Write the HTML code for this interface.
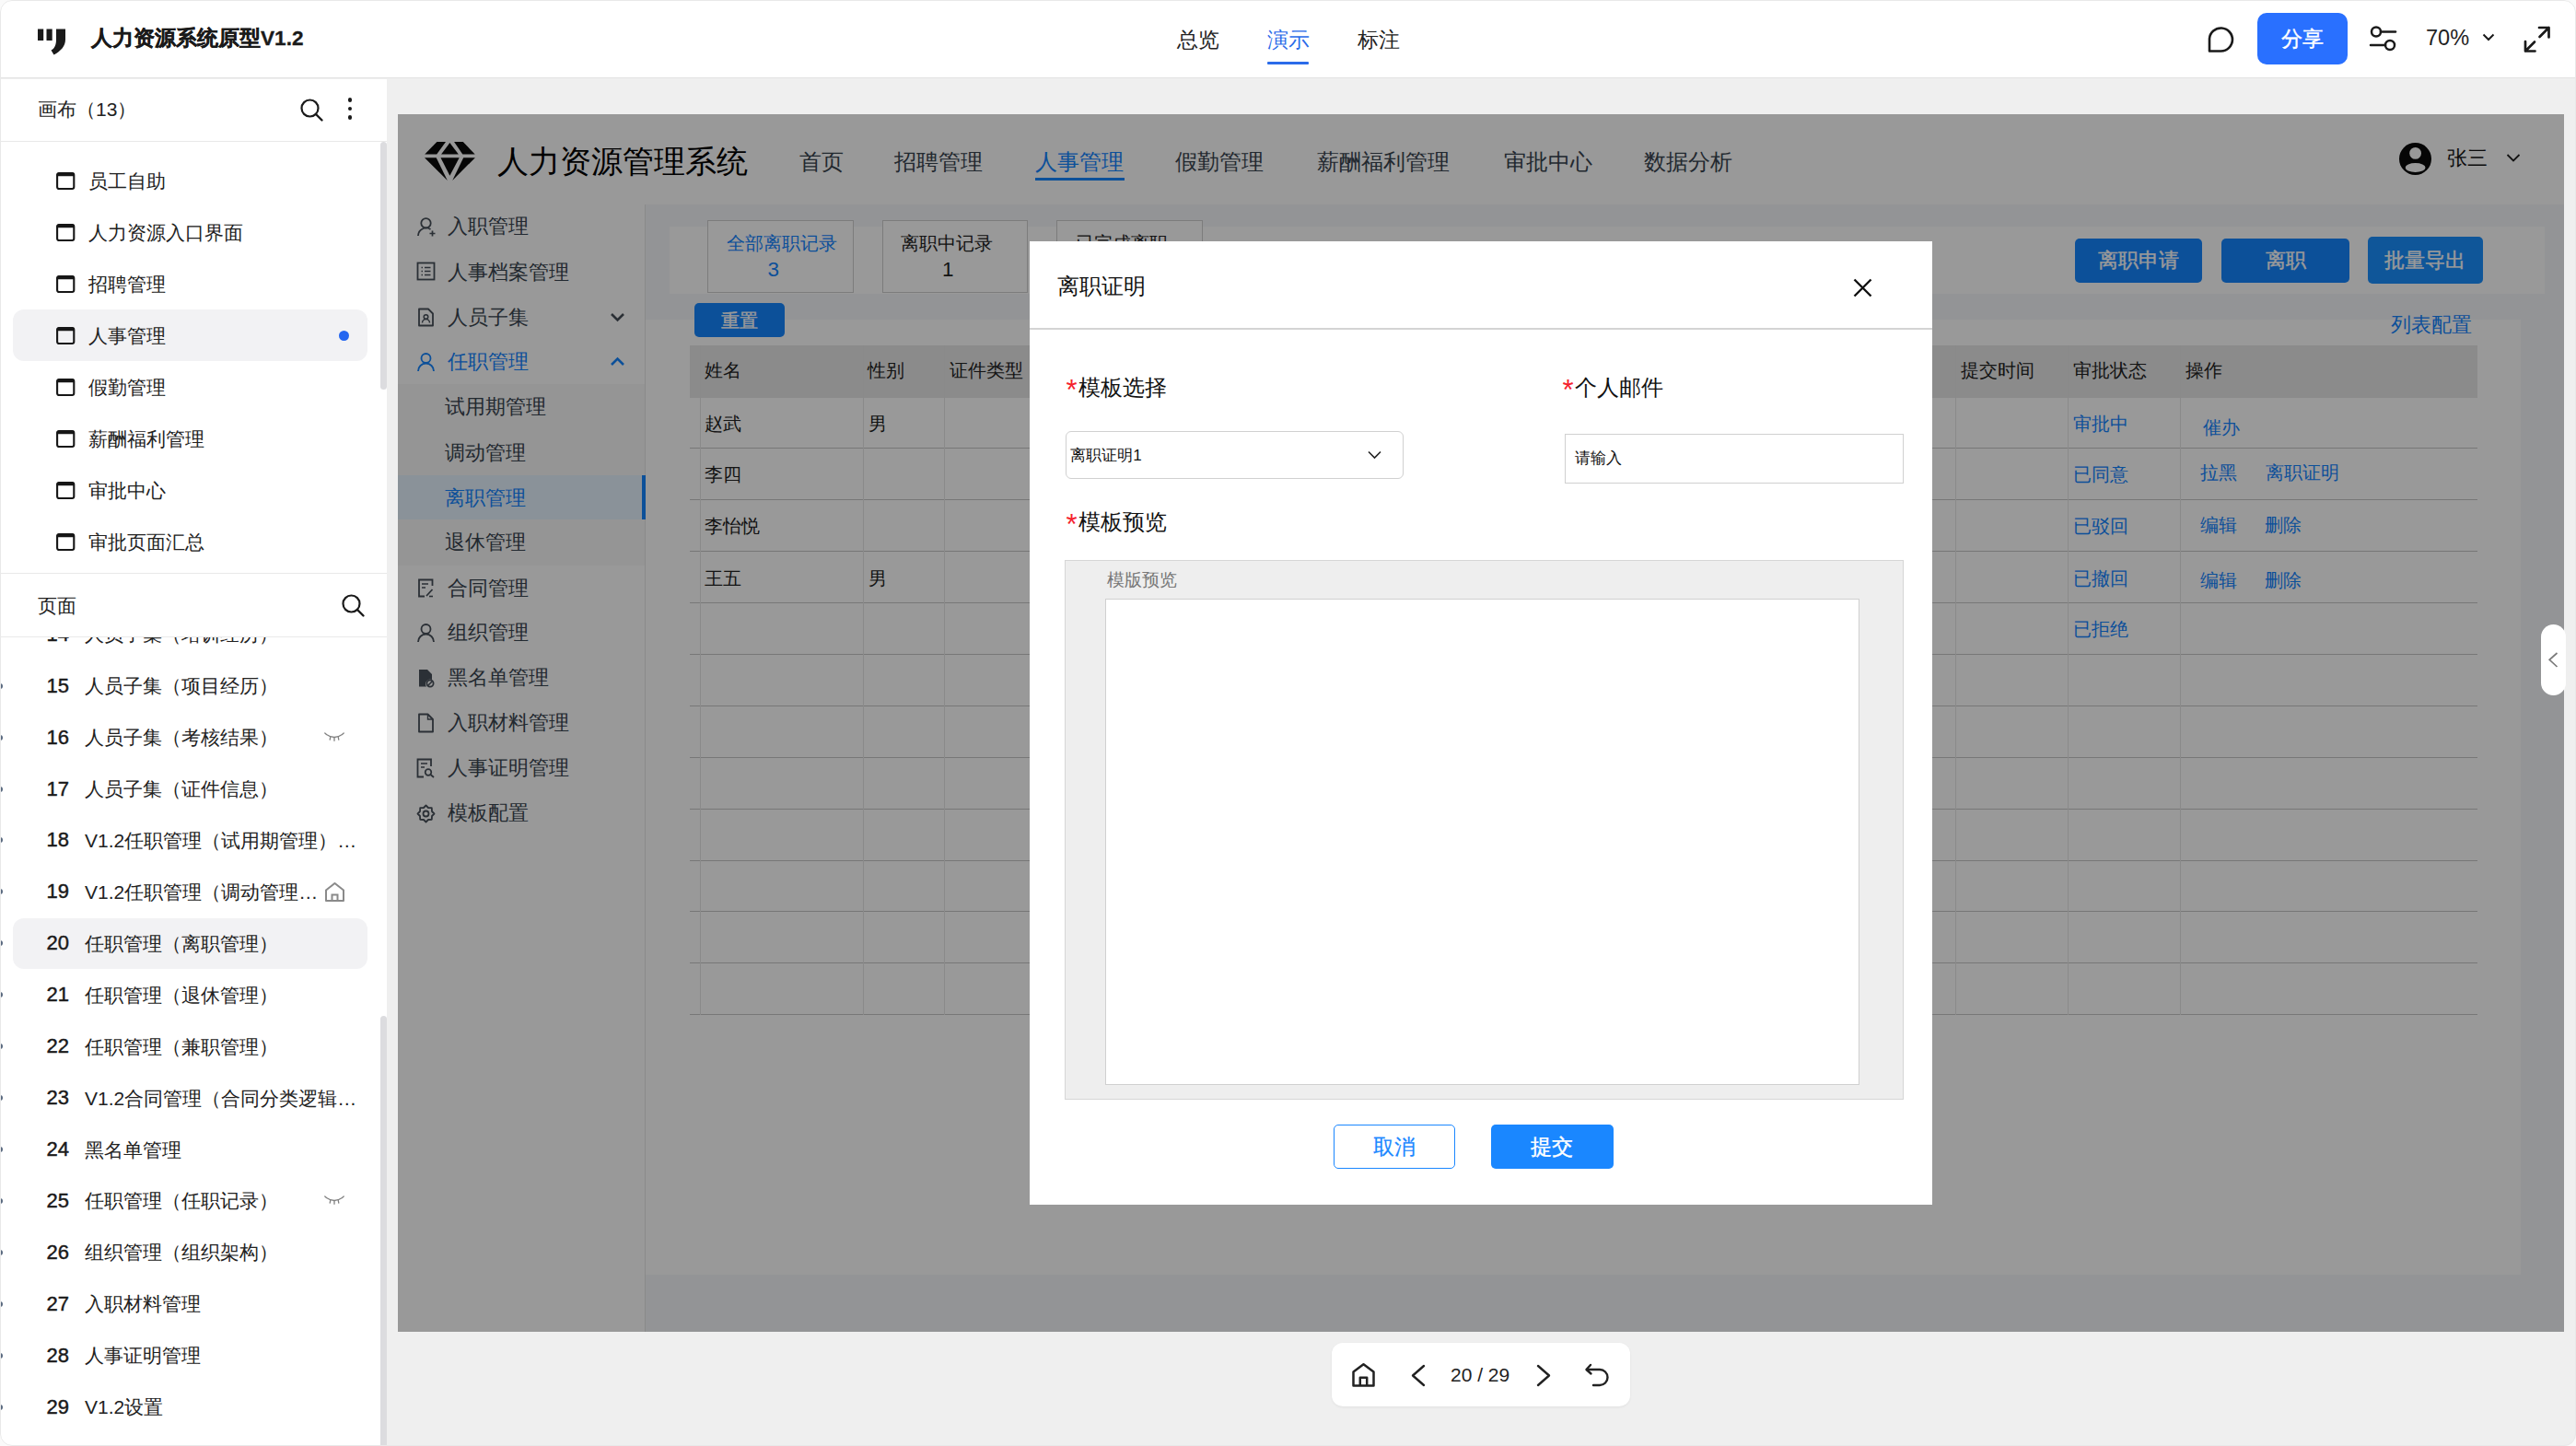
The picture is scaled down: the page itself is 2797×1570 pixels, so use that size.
<!DOCTYPE html>
<html><head><meta charset="utf-8"><style>
*{box-sizing:border-box;margin:0;padding:0}
html,body{width:2797px;height:1570px;overflow:hidden;background:#fafafa;font-family:"Liberation Sans",sans-serif;color:#222}
.a{position:absolute}
.t{position:absolute;white-space:nowrap;line-height:1}
#win{position:absolute;left:0;top:0;width:2797px;height:1570px;border-radius:13px;overflow:hidden;background:#fff}
#wb{position:absolute;left:0;top:0;width:2797px;height:1570px;border:1.5px solid #e9e9e9;border-radius:13px;pointer-events:none}
</style></head><body>
<div id="win">
<div class="a" style="left:0.0px;top:0.0px;width:2797.0px;height:84.0px;background:#fff"></div>
<div class="a" style="left:0.0px;top:84.0px;width:2797.0px;height:1.0px;background:#e2e2e2"></div>
<div class="a" style="left:0.0px;top:85.0px;width:2797.0px;height:1.0px;background:#f0f0f0"></div>
<svg class="a" style="left:40.0px;top:31.0px" width="32" height="29" viewBox="0 0 32 29"><rect x="1" y="0.5" width="6.2" height="12.5" fill="#1a1a1a"/><rect x="10.5" y="0.5" width="6.2" height="12.5" fill="#1a1a1a"/><path d="M21 0.5 H31 V12 C31 19 26 24.5 18.5 28.5 L15.5 23.5 C19.5 21.5 21 17.5 21 12 Z" fill="#1a1a1a"/></svg>
<div class="t" style="left:99.0px;top:30.7px;font-size:22.6px;color:#1a1a1a;font-weight:bold;-webkit-text-stroke:0.3px #1a1a1a">人力资源系统原型V1.2</div>
<div class="t" style="left:1278.0px;top:31.5px;font-size:23px;color:#222;font-weight:normal;">总览</div>
<div class="t" style="left:1376.0px;top:31.5px;font-size:23px;color:#2b6be9;font-weight:normal;">演示</div>
<div class="a" style="left:1376.0px;top:67.0px;width:45.0px;height:3.0px;background:#2b6be9;border-radius:1px"></div>
<div class="t" style="left:1474.0px;top:31.5px;font-size:23px;color:#222;font-weight:normal;">标注</div>
<svg class="a" style="left:2396.0px;top:27.0px" width="31" height="31" viewBox="0 0 31 31"><path d="M3 28.5 V15 A12.5 12.5 0 1 1 15.5 28.5 Z" fill="none" stroke="#1a1a1a" stroke-width="2.6" stroke-linejoin="round"/></svg>
<div class="a" style="left:2451.0px;top:14.0px;width:98.0px;height:56.0px;background:#2970ff;border-radius:10px"></div>
<div class="t" style="left:2477.0px;top:31.9px;font-size:22.6px;color:#fff;font-weight:normal;-webkit-text-stroke:0.4px #fff">分享</div>
<svg class="a" style="left:2572.0px;top:27.0px" width="31" height="31" viewBox="0 0 31 31"><circle cx="8" cy="7.5" r="5" fill="none" stroke="#1a1a1a" stroke-width="2.5"/><path d="M13 7.5 H29" stroke="#1a1a1a" stroke-width="2.5" stroke-linecap="round"/><circle cx="23" cy="22" r="5" fill="none" stroke="#1a1a1a" stroke-width="2.5"/><path d="M2 22 H18" stroke="#1a1a1a" stroke-width="2.5" stroke-linecap="round"/></svg>
<div class="t" style="left:2634.0px;top:30.2px;font-size:23.5px;color:#222;font-weight:normal;">70%</div>
<svg class="a" style="left:2695.0px;top:36.0px" width="14" height="9" viewBox="0 0 14 9"><path d="M1.5 1.5 L7 7 L12.5 1.5" fill="none" stroke="#1a1a1a" stroke-width="2"/></svg>
<svg class="a" style="left:2739.0px;top:27.0px" width="32" height="31" viewBox="0 0 32 31"><path d="M18 3 H28.5 V13.5 M28.5 3 L18.5 13 M3 18 V28.5 H13.5 M3 28.5 L13 18.5" fill="none" stroke="#1a1a1a" stroke-width="2.7" stroke-linejoin="round" stroke-linecap="round"/></svg>
<div class="a" style="left:0.0px;top:86.0px;width:420.0px;height:1484.0px;background:#fff"></div>
<div class="t" style="left:41.0px;top:108.0px;font-size:21px;color:#222;font-weight:normal;">画布（13）</div>
<svg class="a" style="left:325.0px;top:106.0px" width="27" height="27" viewBox="0 0 27 27"><circle cx="11.5" cy="11.5" r="9" fill="none" stroke="#1a1a1a" stroke-width="2.2"/><path d="M18 18 L24.5 24.5" stroke="#1a1a1a" stroke-width="2.4" stroke-linecap="round"/></svg>
<div class="a" style="left:377.5px;top:106.3px;width:4.5px;height:4.5px;border-radius:50%;background:#1a1a1a"></div>
<div class="a" style="left:377.5px;top:115.8px;width:4.5px;height:4.5px;border-radius:50%;background:#1a1a1a"></div>
<div class="a" style="left:377.5px;top:125.3px;width:4.5px;height:4.5px;border-radius:50%;background:#1a1a1a"></div>
<div class="a" style="left:0.0px;top:153.0px;width:420.0px;height:1.0px;background:#e9e9e9"></div>
<div class="a" style="left:14.0px;top:336.0px;width:385.0px;height:56.0px;border-radius:12px;background:#f2f2f4"></div>
<svg class="a" style="left:61.0px;top:186.9px" width="22" height="20" viewBox="0 0 22 20"><rect x="1.1" y="1.1" width="18.2" height="16.9" rx="2" fill="none" stroke="#161616" stroke-width="2.1"/><rect x="0.5" y="0.5" width="19.4" height="3.8" rx="1.5" fill="#161616"/></svg>
<div class="t" style="left:96.0px;top:186.0px;font-size:21px;color:#222;font-weight:normal;">员工自助</div>
<svg class="a" style="left:61.0px;top:243.0px" width="22" height="20" viewBox="0 0 22 20"><rect x="1.1" y="1.1" width="18.2" height="16.9" rx="2" fill="none" stroke="#161616" stroke-width="2.1"/><rect x="0.5" y="0.5" width="19.4" height="3.8" rx="1.5" fill="#161616"/></svg>
<div class="t" style="left:96.0px;top:242.1px;font-size:21px;color:#222;font-weight:normal;">人力资源入口界面</div>
<svg class="a" style="left:61.0px;top:299.0px" width="22" height="20" viewBox="0 0 22 20"><rect x="1.1" y="1.1" width="18.2" height="16.9" rx="2" fill="none" stroke="#161616" stroke-width="2.1"/><rect x="0.5" y="0.5" width="19.4" height="3.8" rx="1.5" fill="#161616"/></svg>
<div class="t" style="left:96.0px;top:298.1px;font-size:21px;color:#222;font-weight:normal;">招聘管理</div>
<svg class="a" style="left:61.0px;top:355.0px" width="22" height="20" viewBox="0 0 22 20"><rect x="1.1" y="1.1" width="18.2" height="16.9" rx="2" fill="none" stroke="#161616" stroke-width="2.1"/><rect x="0.5" y="0.5" width="19.4" height="3.8" rx="1.5" fill="#161616"/></svg>
<div class="t" style="left:96.0px;top:354.1px;font-size:21px;color:#222;font-weight:normal;">人事管理</div>
<svg class="a" style="left:61.0px;top:411.1px" width="22" height="20" viewBox="0 0 22 20"><rect x="1.1" y="1.1" width="18.2" height="16.9" rx="2" fill="none" stroke="#161616" stroke-width="2.1"/><rect x="0.5" y="0.5" width="19.4" height="3.8" rx="1.5" fill="#161616"/></svg>
<div class="t" style="left:96.0px;top:410.2px;font-size:21px;color:#222;font-weight:normal;">假勤管理</div>
<svg class="a" style="left:61.0px;top:467.1px" width="22" height="20" viewBox="0 0 22 20"><rect x="1.1" y="1.1" width="18.2" height="16.9" rx="2" fill="none" stroke="#161616" stroke-width="2.1"/><rect x="0.5" y="0.5" width="19.4" height="3.8" rx="1.5" fill="#161616"/></svg>
<div class="t" style="left:96.0px;top:466.2px;font-size:21px;color:#222;font-weight:normal;">薪酬福利管理</div>
<svg class="a" style="left:61.0px;top:523.2px" width="22" height="20" viewBox="0 0 22 20"><rect x="1.1" y="1.1" width="18.2" height="16.9" rx="2" fill="none" stroke="#161616" stroke-width="2.1"/><rect x="0.5" y="0.5" width="19.4" height="3.8" rx="1.5" fill="#161616"/></svg>
<div class="t" style="left:96.0px;top:522.3px;font-size:21px;color:#222;font-weight:normal;">审批中心</div>
<svg class="a" style="left:61.0px;top:579.2px" width="22" height="20" viewBox="0 0 22 20"><rect x="1.1" y="1.1" width="18.2" height="16.9" rx="2" fill="none" stroke="#161616" stroke-width="2.1"/><rect x="0.5" y="0.5" width="19.4" height="3.8" rx="1.5" fill="#161616"/></svg>
<div class="t" style="left:96.0px;top:578.3px;font-size:21px;color:#222;font-weight:normal;">审批页面汇总</div>
<div class="a" style="left:368.0px;top:358.5px;width:11.0px;height:11.0px;border-radius:50%;background:#2466f0"></div>
<div class="a" style="left:413.0px;top:154.0px;width:7.0px;height:269.0px;border-radius:4px;background:#dcdcdf"></div>
<div class="a" style="left:0.0px;top:622.0px;width:420.0px;height:1.0px;background:#e9e9e9"></div>
<div class="t" style="left:41.0px;top:647.0px;font-size:21px;color:#222;font-weight:normal;">页面</div>
<svg class="a" style="left:370.0px;top:644.0px" width="27" height="27" viewBox="0 0 27 27"><circle cx="11.5" cy="11.5" r="9" fill="none" stroke="#1a1a1a" stroke-width="2.2"/><path d="M18 18 L24.5 24.5" stroke="#1a1a1a" stroke-width="2.4" stroke-linecap="round"/></svg>
<div class="a" style="left:0.0px;top:691.0px;width:420.0px;height:1.0px;background:#e9e9e9"></div>
<div class="a" style="left:0;top:692px;width:420px;height:878px;overflow:hidden">
<div class="a" style="left:-3.0px;top:-6.3px;width:6.0px;height:6.0px;border-radius:50%;background:#5a6a80"></div>
<div class="t" style="left:50.5px;top:-14.3px;font-size:22px;color:#1a1a1a;font-weight:normal;-webkit-text-stroke:0.45px #1a1a1a">14</div>
<div class="t" style="left:92.0px;top:-13.8px;font-size:21px;color:#222;font-weight:normal;">人员子集（培训经历）</div>
<div class="a" style="left:-3.0px;top:49.6px;width:6.0px;height:6.0px;border-radius:50%;background:#5a6a80"></div>
<div class="t" style="left:50.5px;top:41.6px;font-size:22px;color:#1a1a1a;font-weight:normal;-webkit-text-stroke:0.45px #1a1a1a">15</div>
<div class="t" style="left:92.0px;top:42.1px;font-size:21px;color:#222;font-weight:normal;">人员子集（项目经历）</div>
<div class="a" style="left:-3.0px;top:105.6px;width:6.0px;height:6.0px;border-radius:50%;background:#5a6a80"></div>
<div class="t" style="left:50.5px;top:97.6px;font-size:22px;color:#1a1a1a;font-weight:normal;-webkit-text-stroke:0.45px #1a1a1a">16</div>
<div class="t" style="left:92.0px;top:98.1px;font-size:21px;color:#222;font-weight:normal;">人员子集（考核结果）</div>
<svg class="a" style="left:352.0px;top:102.6px" width="22" height="12" viewBox="0 0 22 12"><path d="M2.5 2.5 Q11 8.5 19.5 2.5 M2.5 2.5 L0.8 1 M19.5 2.5 L21.2 1" fill="none" stroke="#808080" stroke-width="1.3" stroke-linecap="round"/><path d="M6.8 5.2 L6.2 8.2 M11 6 V9.3 M15.2 5.2 L15.8 8.2" stroke="#808080" stroke-width="1.3" stroke-linecap="round"/></svg>
<div class="a" style="left:-3.0px;top:161.5px;width:6.0px;height:6.0px;border-radius:50%;background:#5a6a80"></div>
<div class="t" style="left:50.5px;top:153.5px;font-size:22px;color:#1a1a1a;font-weight:normal;-webkit-text-stroke:0.45px #1a1a1a">17</div>
<div class="t" style="left:92.0px;top:154.0px;font-size:21px;color:#222;font-weight:normal;">人员子集（证件信息）</div>
<div class="a" style="left:-3.0px;top:217.4px;width:6.0px;height:6.0px;border-radius:50%;background:#5a6a80"></div>
<div class="t" style="left:50.5px;top:209.4px;font-size:22px;color:#1a1a1a;font-weight:normal;-webkit-text-stroke:0.45px #1a1a1a">18</div>
<div class="t" style="left:92.0px;top:209.9px;font-size:21px;color:#222;font-weight:normal;">V1.2任职管理（试用期管理）…</div>
<div class="a" style="left:-3.0px;top:273.4px;width:6.0px;height:6.0px;border-radius:50%;background:#5a6a80"></div>
<div class="t" style="left:50.5px;top:265.4px;font-size:22px;color:#1a1a1a;font-weight:normal;-webkit-text-stroke:0.45px #1a1a1a">19</div>
<div class="t" style="left:92.0px;top:265.9px;font-size:21px;color:#222;font-weight:normal;">V1.2任职管理（调动管理…</div>
<svg class="a" style="left:352.0px;top:264.9px" width="23" height="23" viewBox="0 0 23 23"><path d="M2 21 V9.5 L11.5 2 L21 9.5 V21 Z" fill="none" stroke="#8a8a8a" stroke-width="2" stroke-linejoin="round"/><path d="M8.5 21 V14.5 H14.5 V21" fill="none" stroke="#8a8a8a" stroke-width="2"/></svg>
<div class="a" style="left:14.0px;top:304.8px;width:385.0px;height:55.0px;border-radius:12px;background:#f2f2f4"></div>
<div class="a" style="left:-3.0px;top:329.3px;width:6.0px;height:6.0px;border-radius:50%;background:#5a6a80"></div>
<div class="t" style="left:50.5px;top:321.3px;font-size:22px;color:#1a1a1a;font-weight:normal;-webkit-text-stroke:0.45px #1a1a1a">20</div>
<div class="t" style="left:92.0px;top:321.8px;font-size:21px;color:#222;font-weight:normal;">任职管理（离职管理）</div>
<div class="a" style="left:-3.0px;top:385.2px;width:6.0px;height:6.0px;border-radius:50%;background:#5a6a80"></div>
<div class="t" style="left:50.5px;top:377.2px;font-size:22px;color:#1a1a1a;font-weight:normal;-webkit-text-stroke:0.45px #1a1a1a">21</div>
<div class="t" style="left:92.0px;top:377.7px;font-size:21px;color:#222;font-weight:normal;">任职管理（退休管理）</div>
<div class="a" style="left:-3.0px;top:441.1px;width:6.0px;height:6.0px;border-radius:50%;background:#5a6a80"></div>
<div class="t" style="left:50.5px;top:433.1px;font-size:22px;color:#1a1a1a;font-weight:normal;-webkit-text-stroke:0.45px #1a1a1a">22</div>
<div class="t" style="left:92.0px;top:433.6px;font-size:21px;color:#222;font-weight:normal;">任职管理（兼职管理）</div>
<div class="a" style="left:-3.0px;top:497.1px;width:6.0px;height:6.0px;border-radius:50%;background:#5a6a80"></div>
<div class="t" style="left:50.5px;top:489.1px;font-size:22px;color:#1a1a1a;font-weight:normal;-webkit-text-stroke:0.45px #1a1a1a">23</div>
<div class="t" style="left:92.0px;top:489.6px;font-size:21px;color:#222;font-weight:normal;">V1.2合同管理（合同分类逻辑…</div>
<div class="a" style="left:-3.0px;top:553.0px;width:6.0px;height:6.0px;border-radius:50%;background:#5a6a80"></div>
<div class="t" style="left:50.5px;top:545.0px;font-size:22px;color:#1a1a1a;font-weight:normal;-webkit-text-stroke:0.45px #1a1a1a">24</div>
<div class="t" style="left:92.0px;top:545.5px;font-size:21px;color:#222;font-weight:normal;">黑名单管理</div>
<div class="a" style="left:-3.0px;top:608.9px;width:6.0px;height:6.0px;border-radius:50%;background:#5a6a80"></div>
<div class="t" style="left:50.5px;top:600.9px;font-size:22px;color:#1a1a1a;font-weight:normal;-webkit-text-stroke:0.45px #1a1a1a">25</div>
<div class="t" style="left:92.0px;top:601.4px;font-size:21px;color:#222;font-weight:normal;">任职管理（任职记录）</div>
<svg class="a" style="left:352.0px;top:605.9px" width="22" height="12" viewBox="0 0 22 12"><path d="M2.5 2.5 Q11 8.5 19.5 2.5 M2.5 2.5 L0.8 1 M19.5 2.5 L21.2 1" fill="none" stroke="#808080" stroke-width="1.3" stroke-linecap="round"/><path d="M6.8 5.2 L6.2 8.2 M11 6 V9.3 M15.2 5.2 L15.8 8.2" stroke="#808080" stroke-width="1.3" stroke-linecap="round"/></svg>
<div class="a" style="left:-3.0px;top:664.9px;width:6.0px;height:6.0px;border-radius:50%;background:#5a6a80"></div>
<div class="t" style="left:50.5px;top:656.9px;font-size:22px;color:#1a1a1a;font-weight:normal;-webkit-text-stroke:0.45px #1a1a1a">26</div>
<div class="t" style="left:92.0px;top:657.4px;font-size:21px;color:#222;font-weight:normal;">组织管理（组织架构）</div>
<div class="a" style="left:-3.0px;top:720.8px;width:6.0px;height:6.0px;border-radius:50%;background:#5a6a80"></div>
<div class="t" style="left:50.5px;top:712.8px;font-size:22px;color:#1a1a1a;font-weight:normal;-webkit-text-stroke:0.45px #1a1a1a">27</div>
<div class="t" style="left:92.0px;top:713.3px;font-size:21px;color:#222;font-weight:normal;">入职材料管理</div>
<div class="a" style="left:-3.0px;top:776.7px;width:6.0px;height:6.0px;border-radius:50%;background:#5a6a80"></div>
<div class="t" style="left:50.5px;top:768.7px;font-size:22px;color:#1a1a1a;font-weight:normal;-webkit-text-stroke:0.45px #1a1a1a">28</div>
<div class="t" style="left:92.0px;top:769.2px;font-size:21px;color:#222;font-weight:normal;">人事证明管理</div>
<div class="a" style="left:-3.0px;top:832.7px;width:6.0px;height:6.0px;border-radius:50%;background:#5a6a80"></div>
<div class="t" style="left:50.5px;top:824.7px;font-size:22px;color:#1a1a1a;font-weight:normal;-webkit-text-stroke:0.45px #1a1a1a">29</div>
<div class="t" style="left:92.0px;top:825.2px;font-size:21px;color:#222;font-weight:normal;">V1.2设置</div>
</div>
<div class="a" style="left:413.0px;top:1103.0px;width:7.0px;height:480.0px;border-radius:4px;background:#dcdcdf"></div>
<div class="a" style="left:420.0px;top:86.0px;width:2377.0px;height:1484.0px;background:#efefef"></div>
<div class="a" style="left:432px;top:124px;width:2352px;height:1322px;overflow:hidden;background:#fff">
<div class="a" style="left:-432px;top:-124px;width:2797px;height:1570px">
<svg class="a" style="left:455.0px;top:148.0px" width="70" height="54" viewBox="0 0 70 54"><g fill="#0a0a0a"><path d="M19.4 6 H29 L19.2 19.4 H6.2 Z"/><path d="M33.4 6.9 L42.8 19.4 H24.1 Z"/><path d="M38.1 6 H47.8 L60.7 19.4 H47.3 Z"/><path d="M6 23.2 H18.7 L30.8 48 Z"/><path d="M23.5 23.2 H43.7 L33.4 42.8 Z"/><path d="M48.2 23.2 H60.9 L36.2 48 Z"/></g></svg>
<div class="t" style="left:540.0px;top:158.0px;font-size:34px;color:#000;font-weight:normal;">人力资源管理系统</div>
<div class="t" style="left:868.0px;top:163.5px;font-size:24px;color:#3a4550;font-weight:normal;">首页</div>
<div class="t" style="left:970.5px;top:163.5px;font-size:24px;color:#3a4550;font-weight:normal;">招聘管理</div>
<div class="t" style="left:1124.0px;top:163.5px;font-size:24px;color:#1585ff;font-weight:normal;">人事管理</div>
<div class="t" style="left:1276.0px;top:163.5px;font-size:24px;color:#3a4550;font-weight:normal;">假勤管理</div>
<div class="t" style="left:1430.0px;top:163.5px;font-size:24px;color:#3a4550;font-weight:normal;">薪酬福利管理</div>
<div class="t" style="left:1633.0px;top:163.5px;font-size:24px;color:#3a4550;font-weight:normal;">审批中心</div>
<div class="t" style="left:1785.0px;top:163.5px;font-size:24px;color:#3a4550;font-weight:normal;">数据分析</div>
<div class="a" style="left:1124.0px;top:193.0px;width:97.0px;height:3.0px;background:#1585ff"></div>
<svg class="a" style="left:2605.0px;top:155.0px" width="35" height="35" viewBox="0 0 35 35"><circle cx="17.5" cy="17.5" r="17.5" fill="#0a0a0a"/><circle cx="17.6" cy="11.4" r="6.4" fill="#fff"/><ellipse cx="17.6" cy="27" rx="10.9" ry="4.9" fill="#fff"/></svg>
<div class="t" style="left:2657.0px;top:160.5px;font-size:22px;color:#111;font-weight:normal;">张三</div>
<svg class="a" style="left:2721.0px;top:166.0px" width="16" height="11" viewBox="0 0 16 11"><path d="M1.5 2 L8 8.5 L14.5 2" fill="none" stroke="#222" stroke-width="1.8"/></svg>
<div class="a" style="left:701.0px;top:222.0px;width:2083.0px;height:1224.0px;background:#f5f7fa"></div>
<div class="a" style="left:432.0px;top:222.0px;width:269.0px;height:1224.0px;background:#fff"></div>
<div class="a" style="left:700.0px;top:222.0px;width:1.3px;height:1224.0px;background:#e6e6e6"></div>
<div class="a" style="left:432.0px;top:417.0px;width:268.0px;height:197.0px;background:#f8f8f8"></div>
<div class="a" style="left:432.0px;top:515.6px;width:268.0px;height:48.5px;background:#e6f4ff"></div>
<div class="a" style="left:697.0px;top:515.6px;width:3.7px;height:48.5px;background:#1585ff"></div>
<div class="t" style="left:486.4px;top:235.0px;font-size:22px;color:#3a4550;font-weight:normal;">入职管理</div>
<svg class="a" style="left:452.0px;top:235.5px" width="22" height="22" viewBox="0 0 22 22"><circle cx="10.5" cy="6.3" r="5.2" fill="none" stroke="#48505a" stroke-width="1.8"/><path d="M2 20 A8.7 8.7 0 0 1 15.5 13" fill="none" stroke="#48505a" stroke-width="1.8"/><path d="M17.5 14.5 V20.5 M14.5 17.5 H20.5" stroke="#48505a" stroke-width="1.7"/></svg>
<div class="t" style="left:486.4px;top:284.5px;font-size:22px;color:#3a4550;font-weight:normal;">人事档案管理</div>
<svg class="a" style="left:452.0px;top:284.0px" width="21" height="21" viewBox="0 0 21 21"><rect x="1.5" y="1.5" width="18" height="18" fill="none" stroke="#48505a" stroke-width="1.8"/><path d="M5.5 6.5 H7 M5.5 10.5 H7 M5.5 14.5 H7 M9 6.5 H15.5 M9 10.5 H15.5 M9 14.5 H15.5" stroke="#48505a" stroke-width="1.6"/></svg>
<div class="t" style="left:486.4px;top:333.5px;font-size:22px;color:#3a4550;font-weight:normal;">人员子集</div>
<svg class="a" style="left:453.0px;top:334.0px" width="19" height="21" viewBox="0 0 19 21"><path d="M2 1.5 H12 L17 6.5 V19.5 H2 Z" fill="none" stroke="#48505a" stroke-width="1.8" stroke-linejoin="round"/><circle cx="9.5" cy="10" r="2.3" fill="none" stroke="#48505a" stroke-width="1.5"/><path d="M5.5 16.5 A4 4 0 0 1 13.5 16.5" fill="none" stroke="#48505a" stroke-width="1.5"/></svg>
<div class="t" style="left:486.4px;top:382.0px;font-size:22px;color:#1585ff;font-weight:normal;">任职管理</div>
<svg class="a" style="left:452.0px;top:383.0px" width="21" height="21" viewBox="0 0 21 21"><circle cx="10.5" cy="6" r="5" fill="none" stroke="#1585ff" stroke-width="1.8"/><path d="M2 20 A8.5 8.5 0 0 1 19 20" fill="none" stroke="#1585ff" stroke-width="1.8"/></svg>
<div class="t" style="left:486.4px;top:627.7px;font-size:22px;color:#3a4550;font-weight:normal;">合同管理</div>
<svg class="a" style="left:453.0px;top:628.2px" width="19" height="21" viewBox="0 0 19 21"><path d="M16.5 8 V1.5 H2 V19.5 H8" fill="none" stroke="#48505a" stroke-width="1.8"/><path d="M5 6 H12 M5 10 H9" stroke="#48505a" stroke-width="1.6"/><path d="M10 19 L16.5 12" stroke="#48505a" stroke-width="1.8"/><path d="M13 19.5 H17" stroke="#48505a" stroke-width="1.6"/></svg>
<div class="t" style="left:486.4px;top:676.0px;font-size:22px;color:#3a4550;font-weight:normal;">组织管理</div>
<svg class="a" style="left:452.0px;top:677.0px" width="21" height="21" viewBox="0 0 21 21"><circle cx="10.5" cy="6" r="5" fill="none" stroke="#48505a" stroke-width="1.8"/><path d="M2 20 A8.5 8.5 0 0 1 19 20" fill="none" stroke="#48505a" stroke-width="1.8"/></svg>
<div class="t" style="left:486.4px;top:725.0px;font-size:22px;color:#3a4550;font-weight:normal;">黑名单管理</div>
<svg class="a" style="left:453.0px;top:725.5px" width="19" height="21" viewBox="0 0 19 21"><path d="M2 1 H11 L16 6 V12 A5 5 0 0 0 10 19.5 H2 Z" fill="#48505a"/><circle cx="14" cy="16" r="3.6" fill="none" stroke="#48505a" stroke-width="1.8"/><path d="M11.5 18.5 L16.5 13.5" stroke="#48505a" stroke-width="1.6"/></svg>
<div class="t" style="left:486.4px;top:774.0px;font-size:22px;color:#3a4550;font-weight:normal;">入职材料管理</div>
<svg class="a" style="left:453.0px;top:774.0px" width="19" height="22" viewBox="0 0 19 22"><path d="M2 1.5 H11.5 L17 7 V20.5 H2 Z" fill="none" stroke="#48505a" stroke-width="1.8" stroke-linejoin="round"/><path d="M11.5 1.5 V7 H17" fill="none" stroke="#48505a" stroke-width="1.4"/></svg>
<div class="t" style="left:486.4px;top:823.0px;font-size:22px;color:#3a4550;font-weight:normal;">人事证明管理</div>
<svg class="a" style="left:452.0px;top:823.0px" width="21" height="22" viewBox="0 0 21 22"><path d="M16 9 V1.5 H1.5 V20.5 H8" fill="none" stroke="#48505a" stroke-width="1.8"/><path d="M5 6 H12 M5 10 H9" stroke="#48505a" stroke-width="1.6"/><circle cx="13" cy="15.5" r="3.3" fill="none" stroke="#48505a" stroke-width="1.7"/><path d="M15.5 18 L19 21" stroke="#48505a" stroke-width="1.8"/></svg>
<div class="t" style="left:486.4px;top:872.0px;font-size:22px;color:#3a4550;font-weight:normal;">模板配置</div>
<svg class="a" style="left:452.0px;top:873.0px" width="21" height="21" viewBox="0 0 21 21"><path d="M10.5 1.5 L13 4 L16.8 4.2 L17 8 L19.5 10.5 L17 13 L16.8 16.8 L13 17 L10.5 19.5 L8 17 L4.2 16.8 L4 13 L1.5 10.5 L4 8 L4.2 4.2 L8 4 Z" fill="none" stroke="#48505a" stroke-width="1.8" stroke-linejoin="round"/><circle cx="10.5" cy="10.5" r="3" fill="none" stroke="#48505a" stroke-width="1.8"/></svg>
<div class="t" style="left:483.0px;top:431.0px;font-size:22px;color:#3a4550;font-weight:normal;">试用期管理</div>
<div class="t" style="left:483.0px;top:480.5px;font-size:22px;color:#3a4550;font-weight:normal;">调动管理</div>
<div class="t" style="left:483.0px;top:529.5px;font-size:22px;color:#1585ff;font-weight:normal;">离职管理</div>
<div class="t" style="left:483.0px;top:578.0px;font-size:22px;color:#3a4550;font-weight:normal;">退休管理</div>
<svg class="a" style="left:662.0px;top:339.0px" width="17" height="11" viewBox="0 0 17 11"><path d="M2 2 L8.5 8.5 L15 2" fill="none" stroke="#48505a" stroke-width="2.6"/></svg>
<svg class="a" style="left:662.0px;top:387.0px" width="17" height="11" viewBox="0 0 17 11"><path d="M2 9 L8.5 2.5 L15 9" fill="none" stroke="#1585ff" stroke-width="2.6"/></svg>
<div class="a" style="left:727.0px;top:246.0px;width:2035.5px;height:73.0px;background:#fff"></div>
<div class="a" style="left:768.0px;top:239.0px;width:158.5px;height:78.5px;border:1.3px solid #cfcfcf;background:#fff"></div>
<div class="t" style="left:788.5px;top:254.9px;font-size:19.5px;color:#1585ff;font-weight:normal;">全部离职记录</div>
<div class="t" style="left:833.5px;top:281.9px;font-size:22.5px;color:#1585ff;font-weight:normal;">3</div>
<div class="a" style="left:957.5px;top:239.0px;width:158.5px;height:78.5px;border:1.3px solid #cfcfcf;background:#fff"></div>
<div class="t" style="left:978.0px;top:254.9px;font-size:19.5px;color:#222;font-weight:normal;">离职中记录</div>
<div class="t" style="left:1023.0px;top:281.9px;font-size:22.5px;color:#222;font-weight:normal;">1</div>
<div class="a" style="left:1147.0px;top:239.0px;width:158.5px;height:78.5px;border:1.3px solid #cfcfcf;background:#fff"></div>
<div class="t" style="left:1167.5px;top:254.9px;font-size:19.5px;color:#222;font-weight:normal;">已完成离职</div>
<div class="a" style="left:2253.0px;top:258.5px;width:138.0px;height:48.5px;background:#1585ff;border-radius:5px"></div>
<div class="t" style="left:2253.0px;top:271.8px;width:138.0px;text-align:center;font-size:22px;color:#fff;-webkit-text-stroke:0.4px #fff">离职申请</div>
<div class="a" style="left:2412.0px;top:258.5px;width:139.0px;height:48.5px;background:#1585ff;border-radius:5px"></div>
<div class="t" style="left:2412.0px;top:271.8px;width:139.0px;text-align:center;font-size:22px;color:#fff;-webkit-text-stroke:0.4px #fff">离职</div>
<div class="a" style="left:2571.0px;top:257.0px;width:124.5px;height:51.0px;background:#1a8fff;border-radius:5px"></div>
<div class="t" style="left:2571.0px;top:271.5px;width:124.5px;text-align:center;font-size:22px;color:#fff;-webkit-text-stroke:0.4px #fff">批量导出</div>
<div class="a" style="left:701.0px;top:347.0px;width:2035.7px;height:1037.0px;background:#fff"></div>
<div class="a" style="left:754.0px;top:329.0px;width:98.0px;height:37.0px;background:#1585ff;border-radius:5px"></div>
<div class="t" style="left:754.0px;top:337.5px;width:98.0px;text-align:center;font-size:20px;color:#fff;-webkit-text-stroke:0.4px #fff">重置</div>
<div class="t" style="left:2596.0px;top:342.0px;font-size:22px;color:#1585ff;font-weight:normal;">列表配置</div>
<div class="a" style="left:748.5px;top:375.0px;width:1941.0px;height:56.5px;background:#e8e8e8"></div>
<div class="a" style="left:748.5px;top:486.0px;width:1941.0px;height:1.2px;background:#c6c6c6"></div>
<div class="a" style="left:748.5px;top:542.0px;width:1941.0px;height:1.2px;background:#c6c6c6"></div>
<div class="a" style="left:748.5px;top:598.0px;width:1941.0px;height:1.2px;background:#c6c6c6"></div>
<div class="a" style="left:748.5px;top:654.0px;width:1941.0px;height:1.2px;background:#c6c6c6"></div>
<div class="a" style="left:748.5px;top:710.0px;width:1941.0px;height:1.2px;background:#c6c6c6"></div>
<div class="a" style="left:748.5px;top:766.0px;width:1941.0px;height:1.2px;background:#c6c6c6"></div>
<div class="a" style="left:748.5px;top:822.0px;width:1941.0px;height:1.2px;background:#c6c6c6"></div>
<div class="a" style="left:748.5px;top:878.0px;width:1941.0px;height:1.2px;background:#c6c6c6"></div>
<div class="a" style="left:748.5px;top:934.0px;width:1941.0px;height:1.2px;background:#c6c6c6"></div>
<div class="a" style="left:748.5px;top:989.0px;width:1941.0px;height:1.2px;background:#c6c6c6"></div>
<div class="a" style="left:748.5px;top:1045.0px;width:1941.0px;height:1.2px;background:#c6c6c6"></div>
<div class="a" style="left:748.5px;top:1101.0px;width:1941.0px;height:1.2px;background:#c6c6c6"></div>
<div class="a" style="left:760.0px;top:375.0px;width:1.0px;height:727.0px;background:#e6e6e6"></div>
<div class="a" style="left:937.0px;top:375.0px;width:1.0px;height:727.0px;background:#e6e6e6"></div>
<div class="a" style="left:1025.0px;top:375.0px;width:1.0px;height:727.0px;background:#e6e6e6"></div>
<div class="a" style="left:2122.5px;top:375.0px;width:1.0px;height:727.0px;background:#e6e6e6"></div>
<div class="a" style="left:2245.0px;top:375.0px;width:1.0px;height:727.0px;background:#e6e6e6"></div>
<div class="a" style="left:2367.0px;top:375.0px;width:1.0px;height:727.0px;background:#e6e6e6"></div>
<div class="t" style="left:765.0px;top:391.6px;font-size:20px;color:#222;font-weight:normal;">姓名</div>
<div class="t" style="left:942.0px;top:391.6px;font-size:20px;color:#222;font-weight:normal;">性别</div>
<div class="t" style="left:1031.0px;top:391.6px;font-size:20px;color:#222;font-weight:normal;">证件类型</div>
<div class="t" style="left:2128.5px;top:391.6px;font-size:20px;color:#222;font-weight:normal;">提交时间</div>
<div class="t" style="left:2251.0px;top:391.6px;font-size:20px;color:#222;font-weight:normal;">审批状态</div>
<div class="t" style="left:2373.0px;top:391.6px;font-size:20px;color:#222;font-weight:normal;">操作</div>
<div class="t" style="left:765.0px;top:449.7px;font-size:20px;color:#222;font-weight:normal;">赵武</div>
<div class="t" style="left:943.0px;top:449.7px;font-size:20px;color:#222;font-weight:normal;">男</div>
<div class="t" style="left:2251.0px;top:449.7px;font-size:20px;color:#1585ff;font-weight:normal;">审批中</div>
<div class="t" style="left:2391.7px;top:453.9px;font-size:20px;color:#1585ff;font-weight:normal;">催办</div>
<div class="t" style="left:765.0px;top:505.4px;font-size:20px;color:#222;font-weight:normal;">李四</div>
<div class="t" style="left:2251.0px;top:505.4px;font-size:20px;color:#1585ff;font-weight:normal;">已同意</div>
<div class="t" style="left:2389.0px;top:503.0px;font-size:20px;color:#1585ff;font-weight:normal;">拉黑</div>
<div class="t" style="left:2459.5px;top:503.0px;font-size:20px;color:#1585ff;font-weight:normal;">离职证明</div>
<div class="t" style="left:765.0px;top:561.3px;font-size:20px;color:#222;font-weight:normal;">李怡悦</div>
<div class="t" style="left:2251.0px;top:561.3px;font-size:20px;color:#1585ff;font-weight:normal;">已驳回</div>
<div class="t" style="left:2389.0px;top:560.0px;font-size:20px;color:#1585ff;font-weight:normal;">编辑</div>
<div class="t" style="left:2459.0px;top:560.0px;font-size:20px;color:#1585ff;font-weight:normal;">删除</div>
<div class="t" style="left:765.0px;top:617.5px;font-size:20px;color:#222;font-weight:normal;">王五</div>
<div class="t" style="left:943.0px;top:617.5px;font-size:20px;color:#222;font-weight:normal;">男</div>
<div class="t" style="left:2251.0px;top:617.5px;font-size:20px;color:#1585ff;font-weight:normal;">已撤回</div>
<div class="t" style="left:2389.0px;top:620.0px;font-size:20px;color:#1585ff;font-weight:normal;">编辑</div>
<div class="t" style="left:2459.0px;top:620.0px;font-size:20px;color:#1585ff;font-weight:normal;">删除</div>
<div class="t" style="left:2251.0px;top:672.8px;font-size:20px;color:#1585ff;font-weight:normal;">已拒绝</div>
<div class="a" style="left:701.0px;top:1384.0px;width:2083.0px;height:62.0px;background:#f5f7fa"></div>
</div>
<div class="a" style="left:0.0px;top:0.0px;width:2352.0px;height:1322.0px;background:rgba(0,0,0,0.4)"></div>
</div>
<div class="a" style="left:1118.0px;top:262.0px;width:980.0px;height:1046.0px;background:#fff"></div>
<div class="t" style="left:1148.0px;top:298.5px;font-size:24px;color:#111;font-weight:normal;">离职证明</div>
<svg class="a" style="left:2012.0px;top:302.0px" width="21" height="21" viewBox="0 0 21 21"><path d="M1.5 1.5 L19.5 19.5 M19.5 1.5 L1.5 19.5" stroke="#111" stroke-width="2.4"/></svg>
<div class="a" style="left:1118.0px;top:356.0px;width:980.0px;height:1.6px;background:#d4d4d4"></div>
<div class="t" style="left:1157.5px;top:408.0px;font-size:31px;color:#f5222d;font-weight:normal;">*</div>
<div class="t" style="left:1170.5px;top:408.9px;font-size:24.3px;color:#111;font-weight:normal;">模板选择</div>
<div class="t" style="left:1696.5px;top:408.0px;font-size:31px;color:#f5222d;font-weight:normal;">*</div>
<div class="t" style="left:1709.5px;top:408.9px;font-size:24.3px;color:#111;font-weight:normal;">个人邮件</div>
<div class="a" style="left:1157.0px;top:467.6px;width:367.4px;height:52.2px;border:1.3px solid #d0d0d0;border-radius:6px;background:#fff"></div>
<div class="t" style="left:1162.3px;top:485.5px;font-size:17px;color:#111;font-weight:normal;">离职证明1</div>
<svg class="a" style="left:1485.0px;top:489.0px" width="15" height="10" viewBox="0 0 15 10"><path d="M1 1.5 L7.5 8 L14 1.5" fill="none" stroke="#222" stroke-width="1.6"/></svg>
<div class="a" style="left:1699.0px;top:471.0px;width:367.6px;height:53.5px;border:1.3px solid #d0d0d0;background:#fff"></div>
<div class="t" style="left:1710.0px;top:489.0px;font-size:17px;color:#111;font-weight:normal;">请输入</div>
<div class="t" style="left:1157.5px;top:554.0px;font-size:31px;color:#f5222d;font-weight:normal;">*</div>
<div class="t" style="left:1170.5px;top:554.9px;font-size:24.3px;color:#111;font-weight:normal;">模板预览</div>
<div class="a" style="left:1156.0px;top:608.0px;width:910.6px;height:586.3px;border:1.3px solid #d6d6d6;background:#eeeeee"></div>
<div class="t" style="left:1201.6px;top:619.9px;font-size:19px;color:#777;font-weight:normal;">模版预览</div>
<div class="a" style="left:1200.0px;top:650.0px;width:819.3px;height:528.0px;border:1.3px solid #d0d0d0;background:#fff"></div>
<div class="a" style="left:1447.7px;top:1221.0px;width:132.0px;height:48.0px;border:1.3px solid #1a87ff;border-radius:5px;background:#fff"></div>
<div class="t" style="left:1447.7px;top:1233.5px;width:132px;text-align:center;font-size:23px;color:#1a87ff;-webkit-text-stroke:0.2px #1a87ff">取消</div>
<div class="a" style="left:1619.0px;top:1221.0px;width:132.6px;height:48.0px;background:#1a87ff;border-radius:5px"></div>
<div class="t" style="left:1619px;top:1233.5px;width:132.6px;text-align:center;font-size:23px;color:#fff;-webkit-text-stroke:0.45px #fff">提交</div>
<div class="a" style="left:2759.0px;top:678.0px;width:27.0px;height:76.5px;background:#fff;border-radius:14px"></div>
<svg class="a" style="left:2765.0px;top:705.0px" width="14" height="24" viewBox="0 0 14 24"><path d="M11.5 4 L3.2 11.3 L11.5 19" fill="none" stroke="#7a7a7a" stroke-width="1.7"/></svg>
<div class="a" style="left:1446.0px;top:1458.0px;width:323.5px;height:69.4px;background:#fff;border-radius:12px;box-shadow:0 1px 3px rgba(0,0,0,0.06)"></div>
<svg class="a" style="left:1467.0px;top:1479.0px" width="27" height="28" viewBox="0 0 27 28"><path d="M2.5 25.5 V10.5 L13.5 2.3 L24.5 10.5 V25.5 Z" fill="none" stroke="#222" stroke-width="2.5" stroke-linejoin="round"/><path d="M9.8 25.5 V16.8 H17.2 V25.5" fill="none" stroke="#222" stroke-width="2.5" stroke-linejoin="round"/></svg>
<svg class="a" style="left:1530.0px;top:1481.0px" width="20" height="25" viewBox="0 0 20 25"><path d="M16 2 L4 12.5 L16 23" fill="none" stroke="#222" stroke-width="2.4" stroke-linejoin="round" stroke-linecap="round"/></svg>
<div class="t" style="left:1575.0px;top:1482.1px;font-size:21px;color:#222;font-weight:normal;">20 / 29</div>
<svg class="a" style="left:1666.0px;top:1481.0px" width="20" height="25" viewBox="0 0 20 25"><path d="M4 2 L16 12.5 L4 23" fill="none" stroke="#222" stroke-width="2.4" stroke-linejoin="round" stroke-linecap="round"/></svg>
<svg class="a" style="left:1720.0px;top:1479.0px" width="29" height="28" viewBox="0 0 29 28"><path d="M7 3 L2.5 8 L7.5 12.5" fill="none" stroke="#222" stroke-width="2.4" stroke-linejoin="round" stroke-linecap="round"/><path d="M3 8 H17 A8.5 8.5 0 0 1 17 25 H10" fill="none" stroke="#222" stroke-width="2.4" stroke-linecap="round"/></svg>
</div><div id="wb"></div>
</body></html>
